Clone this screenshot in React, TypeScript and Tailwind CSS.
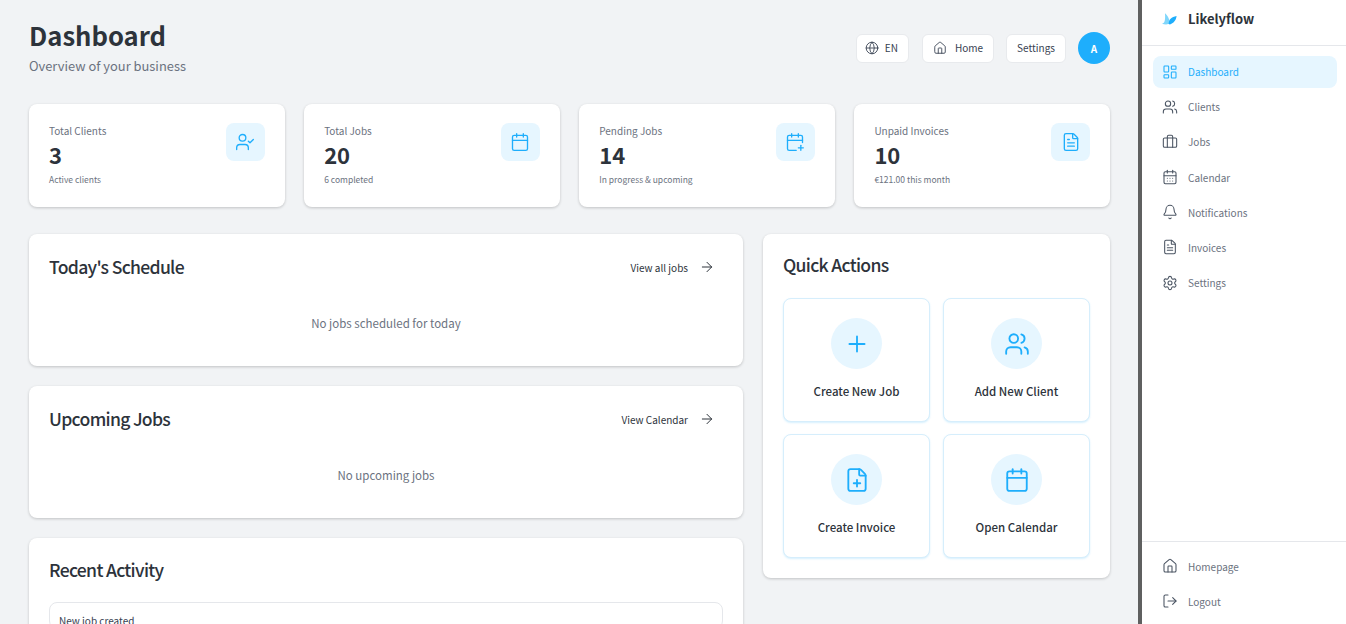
import { ArrowRight, Calendar, CalendarPlus, Briefcase, Bell, FileText, FilePlus, Globe, House, LayoutDashboard, LogOut, Plus, Settings, UserCheck, Users, CalendarDays } from "lucide-react";
import type { ReactNode } from "react";

const font = { fontFamily: '"Noto Sans CJK SC", "Noto Sans", sans-serif' };

function Logo() {
  return (
    <svg width="15" height="12" viewBox="0 0 15 12" fill="none">
      <path d="M0 10.5C2.5 10.5 3.5 8 3 0.3 5.2 2 7.6 6 8.2 10.6 5.5 11.7 2 11.6 0 10.5Z" fill="#7fd6fb" />
      <path d="M6.6 11C6.8 8.6 7.6 6.6 8.6 5.8 10.2 4.4 12 3.4 14.6 3 14.2 6.6 12 10.2 8 11.4Z" fill="#1eaefc" />
    </svg>
  );
}

function StatCard({ label, value, note, icon }: { label: string; value: string; note: string; icon: ReactNode }) {
  return (
    <div className="flex h-[103px] justify-between rounded-lg bg-white px-5 pt-[19px] shadow-[0_1px_3px_rgba(0,0,0,0.2)]">
      <div>
        <div className="mt-[1px] text-[10px] leading-[14px] text-[#6b7280]">{label}</div>
        <div className="mt-[1px] text-[22px] font-bold leading-[30px] text-[#2d333b]">{value}</div>
        <div className="mt-[4px] text-[8.5px] leading-[12px] text-[#6b7280]">{note}</div>
      </div>
      <div className="flex h-[38px] w-[39px] items-center justify-center rounded-lg bg-[#e6f6ff] text-[#1eaefc]">{icon}</div>
    </div>
  );
}

function Panel({ title, link, empty }: { title: string; link: string; empty: string }) {
  return (
    <section className="h-[132px] rounded-lg bg-white px-5 pt-[19px] shadow-[0_1px_3px_rgba(0,0,0,0.2)]">
      <div className="flex items-center justify-between">
        <h2 className="pb-[2px] text-[17.6px] font-medium leading-[28px] tracking-[-0.7px] text-[#2d333b]">{title}</h2>
        <a className="mb-[2px] flex items-center gap-[11px] pr-[8px] text-[10px] text-[#2d333b]">
          {link}
          <ArrowRight size={16} strokeWidth={1.5} />
        </a>
      </div>
      <p className="mt-[30px] text-center text-[11.5px] leading-[20px] text-[#6b7280]">{empty}</p>
    </section>
  );
}

function Action({ label, icon }: { label: string; icon: ReactNode }) {
  return (
    <button className="flex h-[124px] flex-col items-center rounded-lg border border-[#d6eefc] bg-white pt-[19px] shadow-[0_1px_2px_rgba(30,174,252,0.18)]">
      <span className="flex h-[51px] w-[51px] items-center justify-center rounded-full bg-[#e6f6ff] text-[#1eaefc]">{icon}</span>
      <span className="mt-[13px] text-[11.5px] font-medium leading-[18px] text-[#2d333b]">{label}</span>
    </button>
  );
}

function NavItem({ label, icon, active }: { label: string; icon: ReactNode; active?: boolean }) {
  return (
    <div className={`flex h-[32px] items-center gap-[10px] rounded-lg pl-[9px] text-[10px] ${active ? "bg-[#e6f6ff] text-[#1eaefc]" : "text-[#6b7280]"}`}>
      <span className={active ? "text-[#1eaefc]" : "text-[#4b5563]"}>{icon}</span>
      {label}
    </div>
  );
}

export default function App() {
  return (
    <div className="flex h-screen overflow-hidden bg-[#f1f3f5]" style={font}>
      <main className="h-full w-[1138px] shrink-0 overflow-hidden pl-[29px] pr-[28px] pt-[17px]">
        <header className="flex h-[63px] items-start justify-between">
          <div>
            <h1 className="text-[25.6px] font-bold leading-[36px] text-[#2d333b]">Dashboard</h1>
            <p className="mt-[4px] text-[12.9px] leading-[18px] text-[#6b7280]">Overview of your business</p>
          </div>
          <div className="mt-[15px] flex items-center text-[10px] text-[#374151]">
            <div className="flex h-[29px] items-center gap-[6px] rounded-md border border-[#e8eaed] bg-white pb-[1px] pl-[8px] pr-[10px]">
              <Globe size={14} strokeWidth={1.5} />EN
            </div>
            <div className="ml-[13px] flex h-[29px] items-center gap-[8px] rounded-md border border-[#e8eaed] bg-white px-[10px] pb-[1px]">
              <House size={14} strokeWidth={1.5} />Home
            </div>
            <div className="ml-3 flex h-[29px] items-center rounded-md border border-[#e8eaed] bg-white px-[10px] pb-[1px]">Settings</div>
            <div className="ml-3 flex h-8 w-8 items-center justify-center rounded-full bg-[#1eaefc] text-[10px] font-bold text-white">A</div>
          </div>
        </header>
        <div className="mt-[24px] grid grid-cols-4 gap-[19.5px]">
          <StatCard label="Total Clients" value="3" note="Active clients" icon={<UserCheck size={20} strokeWidth={1.6} />} />
          <StatCard label="Total Jobs" value="20" note="6 completed" icon={<Calendar size={20} strokeWidth={1.6} />} />
          <StatCard label="Pending Jobs" value="14" note="In progress & upcoming" icon={<CalendarPlus size={20} strokeWidth={1.6} />} />
          <StatCard label="Unpaid Invoices" value="10" note="€121.00 this month" icon={<FileText size={20} strokeWidth={1.6} />} />
        </div>
        <div className="mt-[27px] grid grid-cols-[1fr_347px] items-start gap-5">
          <div className="flex flex-col gap-5">
            <Panel title="Today's Schedule" link="View all jobs" empty="No jobs scheduled for today" />
            <Panel title="Upcoming Jobs" link="View Calendar" empty="No upcoming jobs" />
            <section className="h-[200px] rounded-lg bg-white px-5 pt-[18px] shadow-[0_1px_3px_rgba(0,0,0,0.2)]">
              <h2 className="text-[17.6px] font-medium leading-[28px] tracking-[-0.7px] text-[#2d333b]">Recent Activity</h2>
              <div className="mt-[18px] rounded-lg border border-[#e5e7eb] px-[9px] pt-[10px] text-[10px] text-[#374151]">New job created</div>
            </section>
          </div>
          <section className="h-[344px] rounded-lg bg-white px-5 pt-[17px] shadow-[0_1px_3px_rgba(0,0,0,0.2)]">
            <h2 className="text-[17.6px] font-medium leading-[28px] tracking-[-0.7px] text-[#2d333b]">Quick Actions</h2>
            <div className="mt-[19px] grid grid-cols-2 gap-x-[13px] gap-y-[12px]">
              <Action label="Create New Job" icon={<Plus size={26} strokeWidth={1.7} />} />
              <Action label="Add New Client" icon={<Users size={26} strokeWidth={1.7} />} />
              <Action label="Create Invoice" icon={<FilePlus size={26} strokeWidth={1.7} />} />
              <Action label="Open Calendar" icon={<Calendar size={26} strokeWidth={1.7} />} />
            </div>
          </section>
        </div>
      </main>
      <aside className="flex h-full w-[208px] flex-col border-l-4 border-[#5f6060] bg-white">
        <div className="flex h-[46px] shrink-0 items-center gap-[11px] border-b border-[#e5e7eb] pb-[8px] pl-[20px]">
          <Logo />
          <span className="text-[13px] font-bold text-[#2d333b]">Likelyflow</span>
        </div>
        <nav className="flex flex-1 flex-col gap-[3.2px] pl-[11px] pr-[9px] pt-[9.5px]">
          <NavItem active label="Dashboard" icon={<LayoutDashboard size={16} strokeWidth={1.6} />} />
          <NavItem label="Clients" icon={<Users size={16} strokeWidth={1.6} />} />
          <NavItem label="Jobs" icon={<Briefcase size={16} strokeWidth={1.6} />} />
          <NavItem label="Calendar" icon={<CalendarDays size={16} strokeWidth={1.6} />} />
          <NavItem label="Notifications" icon={<Bell size={16} strokeWidth={1.6} />} />
          <NavItem label="Invoices" icon={<FileText size={16} strokeWidth={1.6} />} />
          <NavItem label="Settings" icon={<Settings size={16} strokeWidth={1.6} />} />
        </nav>
        <div className="flex h-[83px] shrink-0 flex-col gap-[3px] border-t border-[#e5e7eb] pl-[11px] pr-[9px] pt-[8px]">
          <NavItem label="Homepage" icon={<House size={16} strokeWidth={1.6} />} />
          <NavItem label="Logout" icon={<LogOut size={16} strokeWidth={1.6} />} />
        </div>
      </aside>
    </div>
  );
}
